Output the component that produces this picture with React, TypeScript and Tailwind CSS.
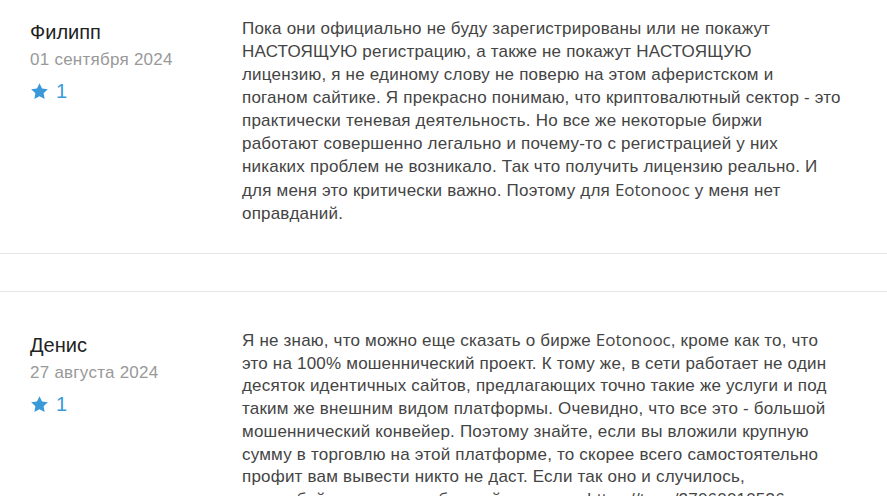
import React from "react";

type Review = {
  name: string;
  date: string;
  rating: number;
  lines: React.ReactNode[];
};

const Brand = () => <span className="font-['Open_Sans',sans-serif] tracking-normal">Eotonooc</span>;

const reviews: Review[] = [
  {
    name: "Филипп",
    date: "01 сентября 2024",
    rating: 1,
    lines: [
      "Пока они официально не буду зарегистрированы или не покажут",
      "НАСТОЯЩУЮ регистрацию, а также не покажут НАСТОЯЩУЮ",
      "лицензию, я не единому слову не поверю на этом аферистском и",
      "поганом сайтике. Я прекрасно понимаю, что криптовалютный сектор - это",
      "практически теневая деятельность. Но все же некоторые биржи",
      "работают совершенно легально и почему-то с регистрацией у них",
      "никаких проблем не возникало. Так что получить лицензию реально. И",
      <>
        для меня это критически важно. Поэтому для <Brand /> у меня нет
      </>,
      "оправданий.",
    ],
  },
  {
    name: "Денис",
    date: "27 августа 2024",
    rating: 1,
    lines: [
      <>
        Я не знаю, что можно еще сказать о бирже <Brand />, кроме как то, что
      </>,
      "это на 100% мошеннический проект. К тому же, в сети работает не один",
      "десяток идентичных сайтов, предлагающих точно такие же услуги и под",
      "таким же внешним видом платформы. Очевидно, что все это - большой",
      "мошеннический конвейер. Поэтому знайте, если вы вложили крупную",
      "сумму в торговлю на этой платформе, то скорее всего самостоятельно",
      "профит вам вывести никто не даст. Если так оно и случилось,",
      "смело бейте тревогу и обращайтесь сюда https://t.me/27060010536",
      "за помощью в возврате средств.",
    ],
  },
];

const Star = () => (
  <svg viewBox="0 0 24 24" className="w-[19px] h-[19px] fill-[#3a9ad9]">
    <path d="M12 1.5l3.2 6.7 7.3 1-5.3 5.1 1.3 7.3L12 18.1l-6.5 3.5 1.3-7.3L1.5 9.2l7.3-1z" />
  </svg>
);

const ReviewCard = ({ review, first }: { review: Review; first?: boolean }) => (
  <div
    className={`flex border-b border-[#e6e6e6] px-[30px] ${
      first ? "-mt-[10px] pt-[27px] pb-[28px]" : "border-t pt-[37px] pb-[28px]"
    }`}
  >
    <div className={`w-[212px] shrink-0 ${first ? "pt-[3px]" : "pt-[4px]"}`}>
      <div className="text-[20px] leading-[24px] text-[#222]">{review.name}</div>
      <div className="text-[17px] leading-[20px] tracking-[0.25px] text-[#999] mt-[6px]">{review.date}</div>
      <div className="flex items-center gap-[7px] mt-[9px] text-[#3a9ad9]">
        <Star />
        <span className="text-[20px] leading-[24px]">{review.rating}</span>
      </div>
    </div>
    <p
      className={`w-[620px] text-[17px] tracking-[0.2px] text-[#444] whitespace-nowrap ${
        first ? "leading-[23px]" : "leading-[22.7px]"
      }`}
    >
      {review.lines.map((line, i) => (
        <React.Fragment key={i}>
          {line}
          {i < review.lines.length - 1 && <br />}
        </React.Fragment>
      ))}
    </p>
  </div>
);

const App = () => {
  return (
    <div className="h-[496px] overflow-hidden bg-white font-['Liberation_Sans',Arial,sans-serif]">
      <ReviewCard review={reviews[0]} first />
      <div className="h-[37px]" />
      <ReviewCard review={reviews[1]} />
    </div>
  );
};

export default App;
